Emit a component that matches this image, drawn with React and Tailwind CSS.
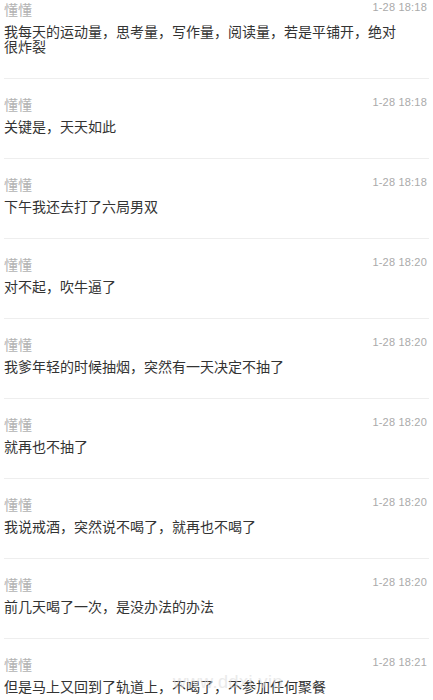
import React from "react";

const items = [
  { t: "1-28 18:18", c: "我每天的运动量，思考量，写作量，阅读量，若是平铺开，绝对很炸裂" },
  { t: "1-28 18:18", c: "关键是，天天如此" },
  { t: "1-28 18:18", c: "下午我还去打了六局男双" },
  { t: "1-28 18:20", c: "对不起，吹牛逼了" },
  { t: "1-28 18:20", c: "我爹年轻的时候抽烟，突然有一天决定不抽了" },
  { t: "1-28 18:20", c: "就再也不抽了" },
  { t: "1-28 18:20", c: "我说戒酒，突然说不喝了，就再也不喝了" },
  { t: "1-28 18:20", c: "前几天喝了一次，是没办法的办法" },
  { t: "1-28 18:21", c: "但是马上又回到了轨道上，不喝了，不参加任何聚餐" },
];

export default function App() {
  return (
    <div
      className="relative w-[433px] h-[700px] overflow-hidden bg-white"
      style={{ fontFamily: '"Noto Sans CJK SC", "Noto Sans", sans-serif' }}
    >
      <div className="flex flex-col">
        {items.map((it, i) => (
          <div
            key={i}
            className={`mx-[4px] border-b border-[#eeeeee] ${i === 0 ? "pt-[1px]" : "pt-[17px]"} pb-[24px]`}
          >
            <div className="flex items-start justify-between h-[16px]">
              <span className="text-[14px] leading-[16px] text-[#b3b3b3]">懂懂</span>
              <span
                className="text-[11px] leading-[12px] tracking-[0.2px] text-[#aaaaaa] pr-[2px]"
                style={{ fontFamily: '"Liberation Sans", Arial, sans-serif' }}
              >
                {it.t}
              </span>
            </div>
            <div className="mt-[7px] pr-[26px] text-[14px] leading-[15px] text-[#333333]">
              {it.c}
            </div>
          </div>
        ))}
      </div>
      <div
        className="pointer-events-none absolute left-[173px] top-[669px] text-[18px] text-[#dddddd] opacity-60 tracking-[0.5px]"
        style={{ fontFamily: '"Liberation Sans", Arial, sans-serif' }}
      >
        www.ddxi.vip
      </div>
    </div>
  );
}
